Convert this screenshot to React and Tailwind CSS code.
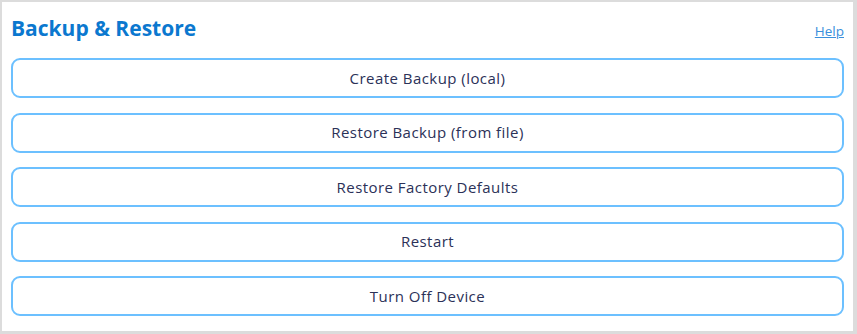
import React from 'react';

const actions = [
  'Create Backup (local)',
  'Restore Backup (from file)',
  'Restore Factory Defaults',
  'Restart',
  'Turn Off Device',
];

function App() {
  return (
    <div className="h-[334px] w-[857px] bg-[#dcdcdc] pr-[2px] pb-[2px] font-['Open_Sans',sans-serif]">
      <div className="h-[332px] border-l-2 border-t-2 border-r-2 border-b-[1px] border-[#dcdcdc] bg-white px-[9px] pt-[14px]">
        <div className="flex items-center justify-between h-[26px]">
          <h1 className="text-[21px] font-bold text-[#0b78cf]">Backup &amp; Restore</h1>
          <a href="#" className="text-[13.5px] text-[#3a8fdc] underline mt-[4px]">Help</a>
        </div>
        <div className="flex flex-col gap-[14.5px] mt-[16px]">
          {actions.map(a => (
            <button
              key={a}
              className="h-[40px] w-full rounded-[9px] border-2 border-[#6cc0ff] bg-white text-[15px] tracking-[0.45px] text-[#2b3158]"
            >
              {a}
            </button>
          ))}
        </div>
      </div>
    </div>
  );
}

export default App;
